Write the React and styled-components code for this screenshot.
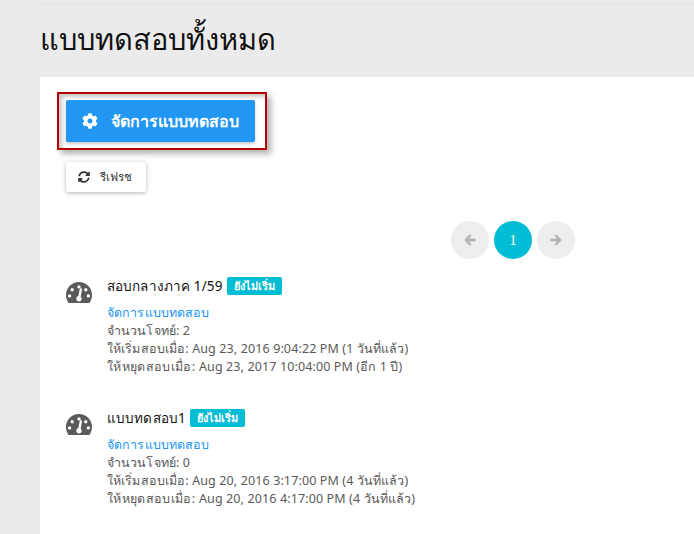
import React from "react";
import styled, { createGlobalStyle } from "styled-components";
import { FaArrowLeft, FaArrowRight, FaCog, FaSyncAlt } from "react-icons/fa";

const GlobalStyle = createGlobalStyle`
  html, body {
    margin: 0;
    padding: 0;
    background: #ebebeb;
    height: 100%;
    overflow: hidden;
  }
  body {
    font-family: "Noto Sans", "Liberation Sans", sans-serif;
    color: #5a5a5a;
  }
`;

const Page = styled.div`
  margin-left: 40px;
  height: 534px;
  display: flex;
  flex-direction: column;
`;

const Header = styled.header`
  height: 73px;
  margin-top: 4px;
  border-top: 1px solid #e2e2e2;
  box-sizing: border-box;
  padding-top: 14px;
`;

const Title = styled.h1`
  margin: 0;
  font-size: 29px;
  line-height: 40px;
  font-weight: 400;
  color: #111;
`;

const Content = styled.main`
  flex: 1;
  background: #fff;
  padding: 15px 0 0 17px;
`;

const Highlight = styled.div`
  width: 210px;
  height: 58px;
  box-sizing: border-box;
  border: 2px solid #b40000;
  box-shadow: 4px 4px 6px rgba(0, 0, 0, 0.3), inset 3px 3px 4px rgba(0, 0, 0, 0.22);
  padding: 6px 0 0 7px;
`;

const ManageButton = styled.button`
  width: 189px;
  height: 42px;
  border: none;
  border-radius: 2px;
  background: #2196f3;
  color: #fff;
  font: 600 16px "Noto Sans", sans-serif;
  display: flex;
  align-items: center;
  gap: 13px;
  padding: 0 0 0 16px;
  box-shadow: 0 2px 3px rgba(0, 0, 0, 0.2);
`;

const RefreshButton = styled.button`
  margin: 12px 0 0 9px;
  width: 80px;
  height: 30px;
  border: none;
  border-radius: 2px;
  background: #fff;
  color: #333;
  font: 400 11.5px "Noto Sans", sans-serif;
  display: flex;
  align-items: center;
  gap: 10px;
  padding: 0 0 0 12px;
  box-shadow: 0 1px 4px rgba(0, 0, 0, 0.3);
`;

const Pager = styled.nav`
  margin: 29px 0 0 394px;
  display: flex;
  gap: 5px;
`;

const PageCircle = styled.span`
  width: 38px;
  height: 38px;
  border-radius: 50%;
  display: flex;
  align-items: center;
  justify-content: center;
  font: 15px "Liberation Serif", serif;
  background: ${(p) => (p.$active ? "#00bcd4" : "#eeeeee")};
  color: ${(p) => (p.$active ? "#fff" : "#b5b5b5")};
`;

const ArrowLeft = styled(FaArrowLeft)`
  stroke: currentColor;
  stroke-width: 40px;
`;

const ArrowRight = styled(FaArrowRight)`
  stroke: currentColor;
  stroke-width: 40px;
`;

const ExamList = styled.div`
  margin: 18px 0 0 9px;
  display: flex;
  flex-direction: column;
  gap: 33px;
`;

const Exam = styled.article`
  display: flex;
  gap: 15px;
`;

const Gauge = styled.svg`
  width: 26px;
  height: 21px;
  margin-top: 5px;
  flex: none;
  fill: #5a5a5a;
`;

const ExamBody = styled.div`
  font-size: 12.5px;
  line-height: 18px;
  letter-spacing: 0.12px;
`;

const ExamName = styled.div`
  display: flex;
  align-items: center;
  gap: 4px;
  height: 18px;
  margin-bottom: 9px;
  font-size: 13.5px;
  color: #111;
`;

const Badge = styled.span`
  background: #00bcd4;
  color: #fff;
  font-size: 11px;
  font-weight: 700;
  line-height: 18px;
  padding: 0 7px;
  border-radius: 2px;
  letter-spacing: 0;
`;

const Manage = styled.a`
  display: block;
  color: #2196f3;
`;

const StopLabel = styled.span`
  letter-spacing: 0.35px;
`;

const exams = [
  {
    name: "สอบกลางภาค 1/59",
    count: 2,
    start: "Aug 23, 2016 9:04:22 PM (1 วันที่แล้ว)",
    stop: "Aug 23, 2017 10:04:00 PM (อีก 1 ปี)",
  },
  {
    name: "แบบทดสอบ1",
    count: 0,
    start: "Aug 20, 2016 3:17:00 PM (4 วันที่แล้ว)",
    stop: "Aug 20, 2016 4:17:00 PM (4 วันที่แล้ว)",
  },
];

function GaugeIcon() {
  return (
    <Gauge viewBox="0 0 26 21">
      <path
        fillRule="evenodd"
        d="M13 0C5.800 0 0 5.800 0 13c0 3 1 5.800 2.600 8h20.800C25 18.800 26 16 26 13 26 5.800 20.200 0 13 0ZM13 3.200a1.700 1.700 0 1 1 0 3.400 1.700 1.700 0 0 1 0-3.400ZM6.200 6a1.700 1.700 0 1 1 0 3.400 1.700 1.700 0 0 1 0-3.400ZM19.800 6a1.700 1.700 0 1 1 0 3.400 1.700 1.700 0 0 1 0-3.400ZM3.600 12.200a1.700 1.700 0 1 1 0 3.400 1.700 1.700 0 0 1 0-3.400ZM22.400 12.200a1.700 1.700 0 1 1 0 3.400 1.700 1.700 0 0 1 0-3.400ZM16 7.400l-1.300 7.300c.7.600 1 1.300 1 2 0 1.600-1.200 2.800-2.700 2.800s-2.700-1.200-2.700-2.800c0-1.300.9-2.400 2.100-2.700l1.300-7.100c.1-.4.900-.9 1.400-.7.500.1 1 .7.900 1.200Z"
      />
    </Gauge>
  );
}

export default function App() {
  return (
    <>
      <GlobalStyle />
      <Page>
        <Header>
          <Title>แบบทดสอบทั้งหมด</Title>
        </Header>
        <Content>
          <Highlight>
            <ManageButton>
              <FaCog size={16} />
              จัดการแบบทดสอบ
            </ManageButton>
          </Highlight>
          <RefreshButton>
            <FaSyncAlt size={12} />
            รีเฟรช
          </RefreshButton>
          <Pager>
            <PageCircle>
              <ArrowLeft size={12} />
            </PageCircle>
            <PageCircle $active>1</PageCircle>
            <PageCircle>
              <ArrowRight size={12} />
            </PageCircle>
          </Pager>
          <ExamList>
            {exams.map((exam) => (
              <Exam key={exam.name}>
                <GaugeIcon />
                <ExamBody>
                  <ExamName>
                    {exam.name}
                    <Badge>ยังไม่เริ่ม</Badge>
                  </ExamName>
                  <Manage>จัดการแบบทดสอบ</Manage>
                  <div>จำนวนโจทย์: {exam.count}</div>
                  <div>ให้เริ่มสอบเมื่อ: {exam.start}</div>
                  <div>
                    <StopLabel>ให้หยุดสอบเมื่อ:</StopLabel> {exam.stop}
                  </div>
                </ExamBody>
              </Exam>
            ))}
          </ExamList>
        </Content>
      </Page>
    </>
  );
}
